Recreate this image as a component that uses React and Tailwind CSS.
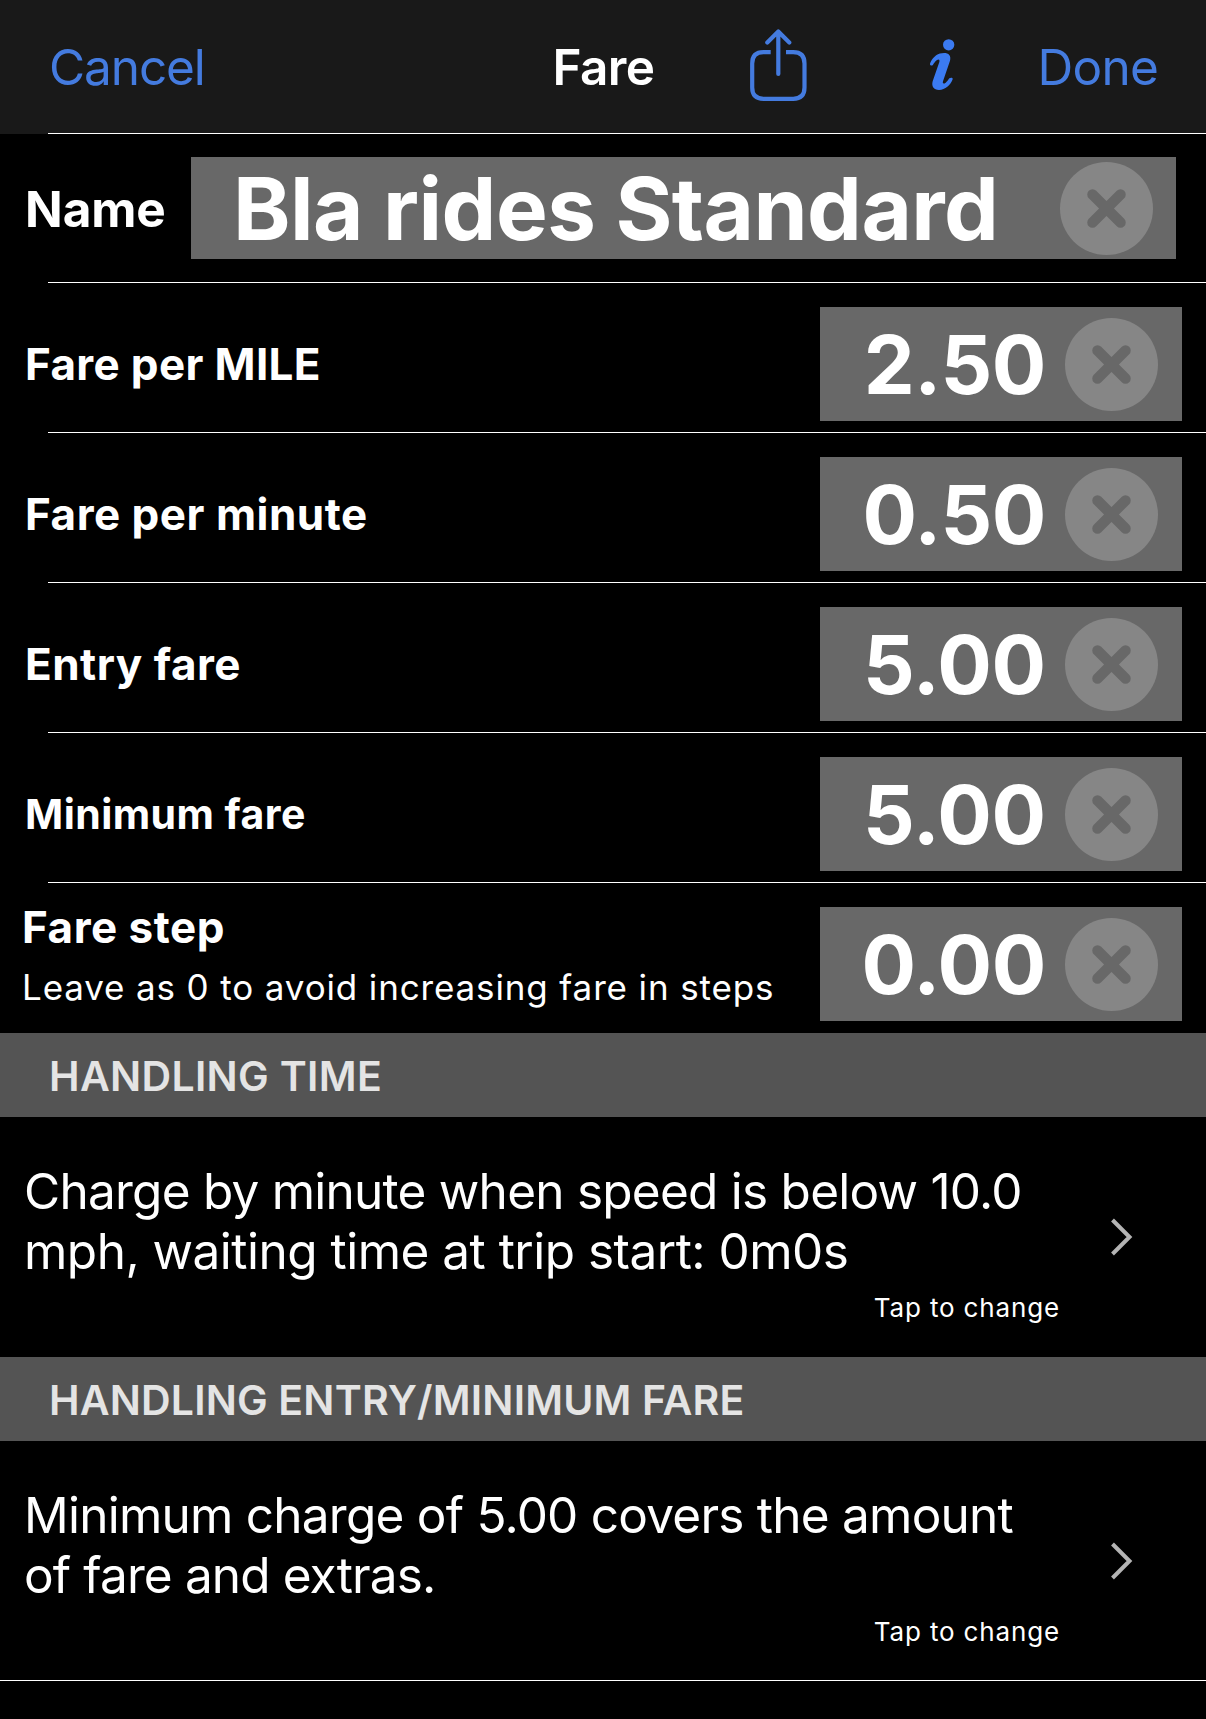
import React from "react";

const fares = [
  { label: "Fare per MILE", value: "2.50", labelClass: "text-[44px] tracking-[0.35px]", valueClass: "tracking-[-0.4px]" },
  { label: "Fare per minute", value: "0.50", labelClass: "text-[44px] tracking-[0.5px]", valueClass: "tracking-[-0.4px]" },
  { label: "Entry fare", value: "5.00", labelClass: "text-[44px] tracking-[0.5px]", valueClass: "tracking-[-0.2px]" },
  { label: "Minimum fare", value: "5.00", labelClass: "text-[41px] tracking-[0.45px]", valueClass: "tracking-[-0.2px]" },
];

const ShareIcon = () => (
  <svg
    width="57"
    height="73"
    viewBox="750 29 57 73"
    fill="none"
    stroke="currentColor"
    strokeWidth="4.2"
    className="-mt-[5px]"
  >
    <path d="M770.7 52.2H763.5Q752.2 52.2 752.2 63.5V87.6Q752.2 98.9 763.5 98.9H793.2Q804.5 98.9 804.5 87.6V63.5Q804.5 52.2 793.2 52.2H786" />
    <path d="M778.3 32V74M767.3 42.6L778.3 31.6L789.3 42.6" strokeLinecap="round" strokeLinejoin="round" />
  </svg>
);

const InfoIcon = () => (
  <svg width="28" height="54" viewBox="593 85 84 162" fill="currentColor" className="-mt-[5px]">
    <circle cx="655" cy="105.500" r="17" />
    <path d="M600 166C598 164 599 161 601 157C609 140 624 130 641 130C655 130 663 138 659 153L638 215C636 222 640 224 646 219C651 215 654 210 657 206C660 203 669 203 667 209C660 227 645 241 626 241C610 241 603 230 607 215L627 157C629 149 625 147 619 152C614 156 611 161 608 165C606 168 602 169 600 166Z" />
  </svg>
);

const ClearButton = () => (
  <button aria-label="Clear" className="shrink-0">
    <svg width="93" height="93" viewBox="0 0 93 93">
      <circle cx="46.500" cy="46.500" r="46.500" fill="#868686" />
      <path d="M32.500 32.500L60.500 60.500M60.500 32.500L32.500 60.500" stroke="#686868" strokeWidth="10.500" strokeLinecap="round" />
    </svg>
  </button>
);

const Divider = () => <div className="ml-12 h-px bg-white" />;

const ValueBox = ({ value, className }) => (
  <div className="flex h-[114px] w-[362px] shrink-0 items-center justify-end gap-[19px] bg-[#686868] pr-6">
    <span className={`pt-[3px] text-[81px] leading-none font-bold ${className}`}>{value}</span>
    <ClearButton />
  </div>
);

const SectionHeader = ({ title, className }) => (
  <div className="flex h-[84px] items-center bg-[#545454] pt-0.5 pl-[49px]">
    <h2 className={`text-[41px] leading-none font-semibold text-[#e4e4e4] ${className}`}>{title}</h2>
  </div>
);

const LinkRow = ({ lines }) => (
  <div className="flex h-[240px] items-center pr-[73px]">
    <div className="h-full w-[1060px] pt-11 pl-6">
      {lines.map((line) => (
        <p key={line.text} className={`text-[49.5px] leading-[60px] whitespace-nowrap ${line.className}`}>
          {line.text}
        </p>
      ))}
      <p className="mt-[11px] text-right text-[26px] leading-8 tracking-[0.85px]">Tap to change</p>
    </div>
    <svg width="24" height="40" viewBox="0 0 24 40" fill="none" stroke="#b4b4b4" strokeWidth="4" className="ml-auto">
      <path d="M3.500 3L20.500 20L3.500 37" />
    </svg>
  </div>
);

const App = () => {
  return (
    <div className="min-h-[1719px] w-[1206px] bg-black font-['Inter',sans-serif] text-white">
      <div className="bg-[#191919]">
        <header className="grid h-[133px] grid-cols-[1fr_auto_1fr] items-center pt-0.5 pr-12 pl-[49px] text-[49.5px] leading-none">
          <button className="justify-self-start tracking-[-1.1px] text-[#447bdf]">Cancel</button>
          <h1 className="font-semibold tracking-[-0.58px]">Fare</h1>
          <div className="flex items-center justify-end text-[#447bdf]">
            <button aria-label="Share">
              <ShareIcon />
            </button>
            <button aria-label="Info" className="ml-[121px] text-[#3b7bf2]">
              <InfoIcon />
            </button>
            <button className="ml-[82px] tracking-[-0.78px]">Done</button>
          </div>
        </header>
        <Divider />
      </div>

      <div className="flex h-[148px] items-center pr-[30px] pl-[25px]">
        <span className="w-[166px] pt-[3px] text-[49.5px] leading-none font-bold tracking-[-0.1px]">Name</span>
        <div className="flex h-[102px] flex-1 items-center justify-between bg-[#686868] pr-[23px] pl-[42px]">
          <span className="text-[87px] leading-none font-bold tracking-[-0.55px] whitespace-nowrap">
            Bla rides Standard
          </span>
          <ClearButton />
        </div>
      </div>

      {fares.map((fare) => (
        <div key={fare.label}>
          <Divider />
          <div className="flex h-[149px] items-center justify-between pt-[13px] pr-6 pl-[25px]">
            <span className={`leading-none font-bold ${fare.labelClass}`}>{fare.label}</span>
            <ValueBox value={fare.value} className={fare.valueClass} />
          </div>
        </div>
      ))}

      <Divider />
      <div className="flex h-[150px] justify-between pr-6 pl-[22px]">
        <div className="pt-5">
          <p className="text-[44px] leading-[48px] font-bold tracking-[0.5px]">Fare step</p>
          <p className="mt-[15px] text-[35px] leading-[42px] tracking-[0.86px] whitespace-nowrap">
            Leave as 0 to avoid increasing fare in steps
          </p>
        </div>
        <div className="pt-6">
          <ValueBox value="0.00" className="tracking-[-0.4px]" />
        </div>
      </div>

      <SectionHeader title="HANDLING TIME" className="tracking-[0.32px]" />
      <LinkRow
        lines={[
          { text: "Charge by minute when speed is below 10.0", className: "tracking-[-0.75px]" },
          { text: "mph, waiting time at trip start: 0m0s", className: "tracking-[-0.51px]" },
        ]}
      />

      <SectionHeader title="HANDLING ENTRY/MINIMUM FARE" className="tracking-[0.17px]" />
      <LinkRow
        lines={[
          { text: "Minimum charge of 5.00 covers the amount", className: "tracking-[-0.76px]" },
          { text: "of fare and extras.", className: "tracking-[-0.87px]" },
        ]}
      />
      <div className="-mt-px h-px bg-white" />
    </div>
  );
};

export default App;
